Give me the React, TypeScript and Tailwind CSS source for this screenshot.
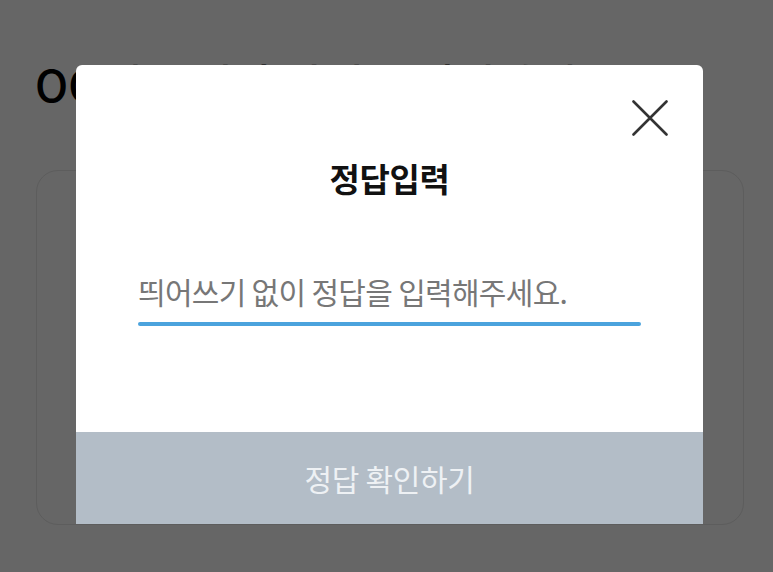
const font = { fontFamily: '"Noto Sans CJK KR", "Noto Sans", sans-serif' }

function CloseIcon() {
  return (
    <svg width="36" height="36" viewBox="0 0 36 36" fill="none">
      <path d="M1.5 1.5L34.5 34.5M34.5 1.5L1.5 34.5" stroke="#333" strokeWidth="2.6" strokeLinecap="round" />
    </svg>
  )
}

export default function App() {
  return (
    <div className="relative h-[572px] w-[773px] overflow-hidden bg-[#666666]" style={font}>
      {/* page behind the dim overlay */}
      <div className="px-[35px] pt-[58px]">
        <h1 className="text-[44px] leading-[50px] font-medium text-black whitespace-nowrap">
          OO에 들어갈 단어를 입력하세요
        </h1>
        <div className="mt-[62px] ml-px h-[355px] w-[708px] rounded-[22px] border border-[#5d5d5d]" />
      </div>

      {/* modal */}
      <div className="absolute left-[76px] top-[65px] flex h-[459px] w-[627px] flex-col overflow-hidden rounded-t-[6px] bg-white">
        <div className="relative flex h-[367px] flex-col items-center">
          <button className="absolute right-[35px] top-[35px]">
            <CloseIcon />
          </button>
          <h2 className="mt-[89px] h-[48px] text-[33px] leading-[48px] font-bold tracking-[-0.3px] text-[#111]">
            정답입력
          </h2>
          <div className="mt-[67px] w-full px-[62px]">
            <input
              className="h-[44px] w-full bg-transparent text-[30px] leading-[44px] tracking-[-0.7px] text-[#222] outline-none placeholder:text-[#777777]"
              style={font}
              placeholder="띄어쓰기 없이 정답을 입력해주세요."
            />
            <div className="mt-[9px] h-[4px] w-full rounded-full bg-[#4ba3dd]" />
          </div>
        </div>
        <button className="flex flex-1 items-center justify-center bg-[#b3bdc7] text-[30px] tracking-[-0.3px] text-[#eef1f4]">
          정답 확인하기
        </button>
      </div>
    </div>
  )
}
